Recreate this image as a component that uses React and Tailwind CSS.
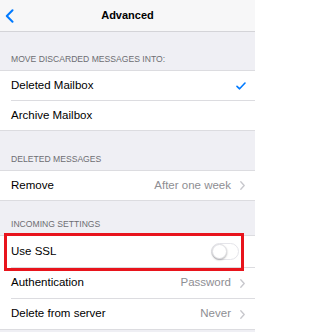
import React from 'react';

const Chevron = () => (
  <svg width="5" height="9" viewBox="0 0 5 9" className="ml-[9px] shrink-0">
    <path d="M0.8 0.8 L4.2 4.5 L0.8 8.2" fill="none" stroke="#c7c7cc" strokeWidth="1.3" strokeLinecap="round" strokeLinejoin="round" />
  </svg>
);

const Header = ({ children, h }) => (
  <div className={`${h} flex items-end px-[11px] pb-[6px] text-[8.6px] text-[#6d6d72] leading-none`}>
    {children}
  </div>
);

const Row = ({ label, value, h, last, children }) => (
  <div className={`${h} pl-[11px] relative`}>
    <div className={`h-full flex items-center pr-[10px] ${last ? '' : 'border-b border-[#dcdce0]'}`}>
      <span className="flex-1 text-black">{label}</span>
      {value && <span className="text-[#8e8e93]">{value}</span>}
      {value && <Chevron />}
      {children}
    </div>
  </div>
);

export default function App() {
  return (
    <div
      className="w-[255px] h-[332px] overflow-hidden bg-[#efeff4] text-[11.5px]"
      style={{ fontFamily: '"Liberation Sans", Arial, sans-serif' }}
    >
      {/* Nav bar */}
      <div className="h-[32px] bg-[#f7f7f8] border-b border-[#d4d4d8] grid grid-cols-[1fr_auto_1fr] items-center">
        <div className="pl-[5px] flex items-center">
          <svg width="9" height="14" viewBox="0 0 9 14">
            <path d="M7.5 1.2 L1.8 7 L7.5 12.8" fill="none" stroke="#007aff" strokeWidth="2" strokeLinecap="round" strokeLinejoin="round" />
          </svg>
        </div>
        <div className="text-[11px] font-bold text-black">Advanced</div>
        <div />
      </div>

      <Header h="h-[38px]">MOVE DISCARDED MESSAGES INTO:</Header>
      <div className="bg-white border-y border-[#dcdce0]">
        <Row label="Deleted Mailbox" h="h-[30px]">
          <svg width="10" height="8" viewBox="0 0 10 8" className="mr-[-1px]">
            <path d="M1 4.3 L3.6 6.8 L9 1" fill="none" stroke="#007aff" strokeWidth="1.6" strokeLinecap="round" strokeLinejoin="round" />
          </svg>
        </Row>
        <Row label="Archive Mailbox" h="h-[29px]" last />
      </div>

      <Header h="h-[39px]">DELETED MESSAGES</Header>
      <div className="bg-white border-y border-[#dcdce0]">
        <Row label="Remove" value="After one week" h="h-[29px]" last />
      </div>

      <Header h="h-[34px]">INCOMING SETTINGS</Header>
      <div className="bg-white border-y border-[#dcdce0]">
        <div className="relative">
          <Row label="Use SSL" h="h-[32px]">
            <div className="w-[28px] h-[17px] rounded-full border border-[#e5e5ea] bg-white relative mr-[6px]">
              <div className="absolute left-0 top-0 w-[15px] h-[15px] rounded-full bg-white shadow-[0_1px_2px_rgba(0,0,0,0.3)] border border-[#e0e0e4]" />
            </div>
          </Row>
          <div className="absolute top-[-3px] bottom-[-3px] left-[4px] right-[11px] border-[3px] border-[#e8141c] pointer-events-none" />
        </div>
        <Row label="Authentication" value="Password" h="h-[31px]" />
        <Row label="Delete from server" value="Never" h="h-[30px]" last />
      </div>
    </div>
  );
}
